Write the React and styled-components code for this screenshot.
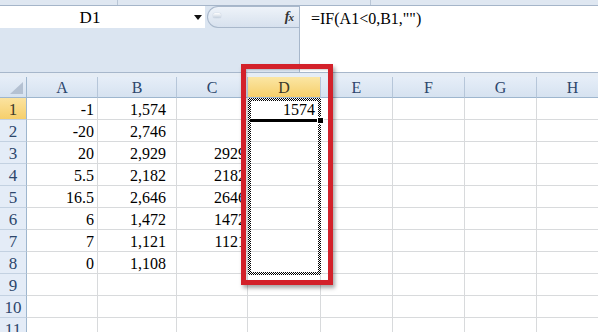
import React from 'react';
import styled, { createGlobalStyle } from 'styled-components';

const Global = createGlobalStyle`
  html, body { margin: 0; padding: 0; background: #fff; overflow: hidden; }
  #root { width: 598px; height: 332px; }
`;

const Page = styled.div`
  position: relative;
  width: 598px;
  height: 332px;
  overflow: hidden;
  background: #fff;
  font-family: "Liberation Serif", "Times New Roman", serif;
`;

const TopStrip = styled.div`
  display: flex;
  height: 6px;
  box-sizing: border-box;
  background: #dfe7f1;
  border-bottom: 1px solid #a5b5c9;
`;

const TopSeg = styled.div`
  width: ${p => p.$w}px;
  border-right: 1px solid #b9c6d6;
  box-sizing: border-box;
`;

const FormulaRow = styled.div`
  display: flex;
  height: 67px;
  box-sizing: border-box;
  border-bottom: 1px solid #a7b7cb;
`;

const LeftPanel = styled.div`
  width: 299px;
  background: #dbe5f1;
  display: flex;
  flex-direction: column;
`;

const NameRow = styled.div`
  display: flex;
  height: 22px;
`;

const NameBox = styled.div`
  width: 205px;
  background: #fff;
  display: flex;
  align-items: center;
`;

const NameLabel = styled.div`
  width: 180px;
  padding-top: 1px;
  text-align: center;
  font-size: 17px;
  color: #000;
`;

const Arrow = styled.div`
  margin-left: 14px;
  width: 0;
  height: 0;
  border-left: 4px solid transparent;
  border-right: 4px solid transparent;
  border-top: 5px solid #111;
`;

const Handle = styled.div`
  flex: 1;
  margin-left: 2px;
  box-sizing: border-box;
  border: 1px solid #a9b8cb;
  border-right: none;
  border-radius: 11px 0 0 11px;
  background: linear-gradient(#eef3f9, #d7e1ee);
  display: flex;
  align-items: center;
  justify-content: space-between;
  padding: 0 6px 0 5px;
`;

const Grip = styled.div`
  width: 8px;
  height: 5px;
  border-radius: 3px;
  background: linear-gradient(#ffffff, #c3cfdd);
  box-shadow: 0 0 1px #9aa9bc;
  margin-top: -4px;
`;

const Fx = styled.div`
  font-style: italic;
  font-weight: bold;
  font-size: 14px;
  color: #333;
  letter-spacing: -1px;
  & span { font-size: 11px; }
`;

const FormulaBox = styled.div`
  flex: 1;
  background: #fff;
  border-left: 1px solid #a7b7cb;
  padding: 4px 0 0 11px;
  font-size: 16px;
  color: #000;
  white-space: nowrap;
`;

const Gap = styled.div`
  height: 4px;
  background: #e6edf5;
`;

const Sheet = styled.div`
  display: grid;
  grid-template-columns: 27px 71px 79px 71px 73px 72px 72px 72px 72px;
  grid-template-rows: 21px;
  grid-auto-rows: 22px;
`;

const HeaderCell = styled.div`
  box-sizing: border-box;
  display: flex;
  align-items: center;
  justify-content: center;
  padding-top: 2px;
  font-size: 16px;
  color: ${p => (p.$active ? '#3d3a2a' : '#2c466c')};
  background: ${p =>
    p.$active
      ? 'linear-gradient(#fbe6a4, #f6cf6b)'
      : 'linear-gradient(#e6eef8, #d6e2f0)'};
  border-right: 1px solid #b6c6d9;
  border-bottom: 1px solid #9eb6ce;
`;

const Corner = styled(HeaderCell)`
  justify-content: flex-end;
  align-items: flex-end;
  padding: 0 3px 3px 0;
  border-right: 1px solid #9eb6ce;
`;

const RowHead = styled.div`
  box-sizing: border-box;
  display: flex;
  align-items: center;
  justify-content: center;
  padding-top: 2px;
  font-size: 17px;
  color: ${p => (p.$active ? '#3d3a2a' : '#2c466c')};
  background: ${p =>
    p.$active ? 'linear-gradient(#fbe3a0, #f6cf6b)' : '#e4ecf7'};
  border-right: 1px solid #9eb6ce;
  border-bottom: 1px solid #c3d1e1;
`;

const Cell = styled.div`
  box-sizing: border-box;
  display: flex;
  align-items: center;
  justify-content: flex-end;
  padding: 3px ${p => p.$pad || 3}px 0 0;
  font-size: 16px;
  color: #000;
  white-space: nowrap;
  overflow: hidden;
  border-right: 1px solid #d8dadc;
  border-bottom: 1px solid #d8dadc;
`;

const Ants = styled.div`
  position: absolute;
  left: 248px;
  top: 98px;
  width: 73px;
  height: 177px;
  box-sizing: border-box;
  padding: 3px;
  background: repeating-conic-gradient(#000 0 25%, #fff 0 50%) 0 0 / 2px 2px;
  -webkit-mask: linear-gradient(#000 0 0) content-box, linear-gradient(#000 0 0);
  -webkit-mask-composite: xor;
  mask: linear-gradient(#000 0 0) content-box exclude, linear-gradient(#000 0 0);
`;

const ActiveBar = styled.div`
  position: absolute;
  left: 250px;
  top: 119px;
  width: 68px;
  height: 3px;
  background: #000;
`;

const FillHandle = styled.div`
  position: absolute;
  left: 317px;
  top: 117px;
  width: 5px;
  height: 5px;
  background: #000;
  border: 1px solid #fff;
`;

const RedBox = styled.div`
  position: absolute;
  left: 241px;
  top: 64px;
  width: 92px;
  height: 221px;
  box-sizing: border-box;
  border: 5px solid #d3212a;
  box-shadow: 2px 3px 4px rgba(0, 0, 0, 0.35), inset 1px 1px 2px rgba(0, 0, 0, 0.2);
`;

const cols = ['A', 'B', 'C', 'D', 'E', 'F', 'G', 'H'];
const data = [
  ['-1', '1,574', '', '1574'],
  ['-20', '2,746', '', ''],
  ['20', '2,929', '2929', ''],
  ['5.5', '2,182', '2182', ''],
  ['16.5', '2,646', '2646', ''],
  ['6', '1,472', '1472', ''],
  ['7', '1,121', '1121', ''],
  ['0', '1,108', '', ''],
  ['', '', '', ''],
  ['', '', '', ''],
  ['', '', '', ''],
];

export default function App() {
  return (
    <Page>
      <Global />
      <TopStrip>
        <TopSeg $w={118} />
        <TopSeg $w={253} />
      </TopStrip>
      <FormulaRow>
        <LeftPanel>
          <NameRow>
            <NameBox>
              <NameLabel>D1</NameLabel>
              <Arrow />
            </NameBox>
            <Handle>
              <Grip />
              <Fx>f<span>x</span></Fx>
            </Handle>
          </NameRow>
        </LeftPanel>
        <FormulaBox>=IF(A1&lt;0,B1,"")</FormulaBox>
      </FormulaRow>
      <Gap />
      <Sheet>
        <Corner>
          <svg width="13" height="12" viewBox="0 0 13 12">
            <polygon points="13,0 13,12 0,12" fill="#b4c1d2" />
          </svg>
        </Corner>
        {cols.map(c => (
          <HeaderCell key={c} $active={c === 'D'}>{c}</HeaderCell>
        ))}
        {data.map((row, i) => (
          <React.Fragment key={i}>
            <RowHead $active={i === 0}>{i + 1}</RowHead>
            <Cell>{row[0]}</Cell>
            <Cell $pad={10}>{row[1]}</Cell>
            <Cell $pad={1}>{row[2]}</Cell>
            <Cell $pad={5}>{row[3]}</Cell>
            <Cell />
            <Cell />
            <Cell />
            <Cell />
          </React.Fragment>
        ))}
      </Sheet>
      <Ants />
      <ActiveBar />
      <FillHandle />
      <RedBox />
    </Page>
  );
}
